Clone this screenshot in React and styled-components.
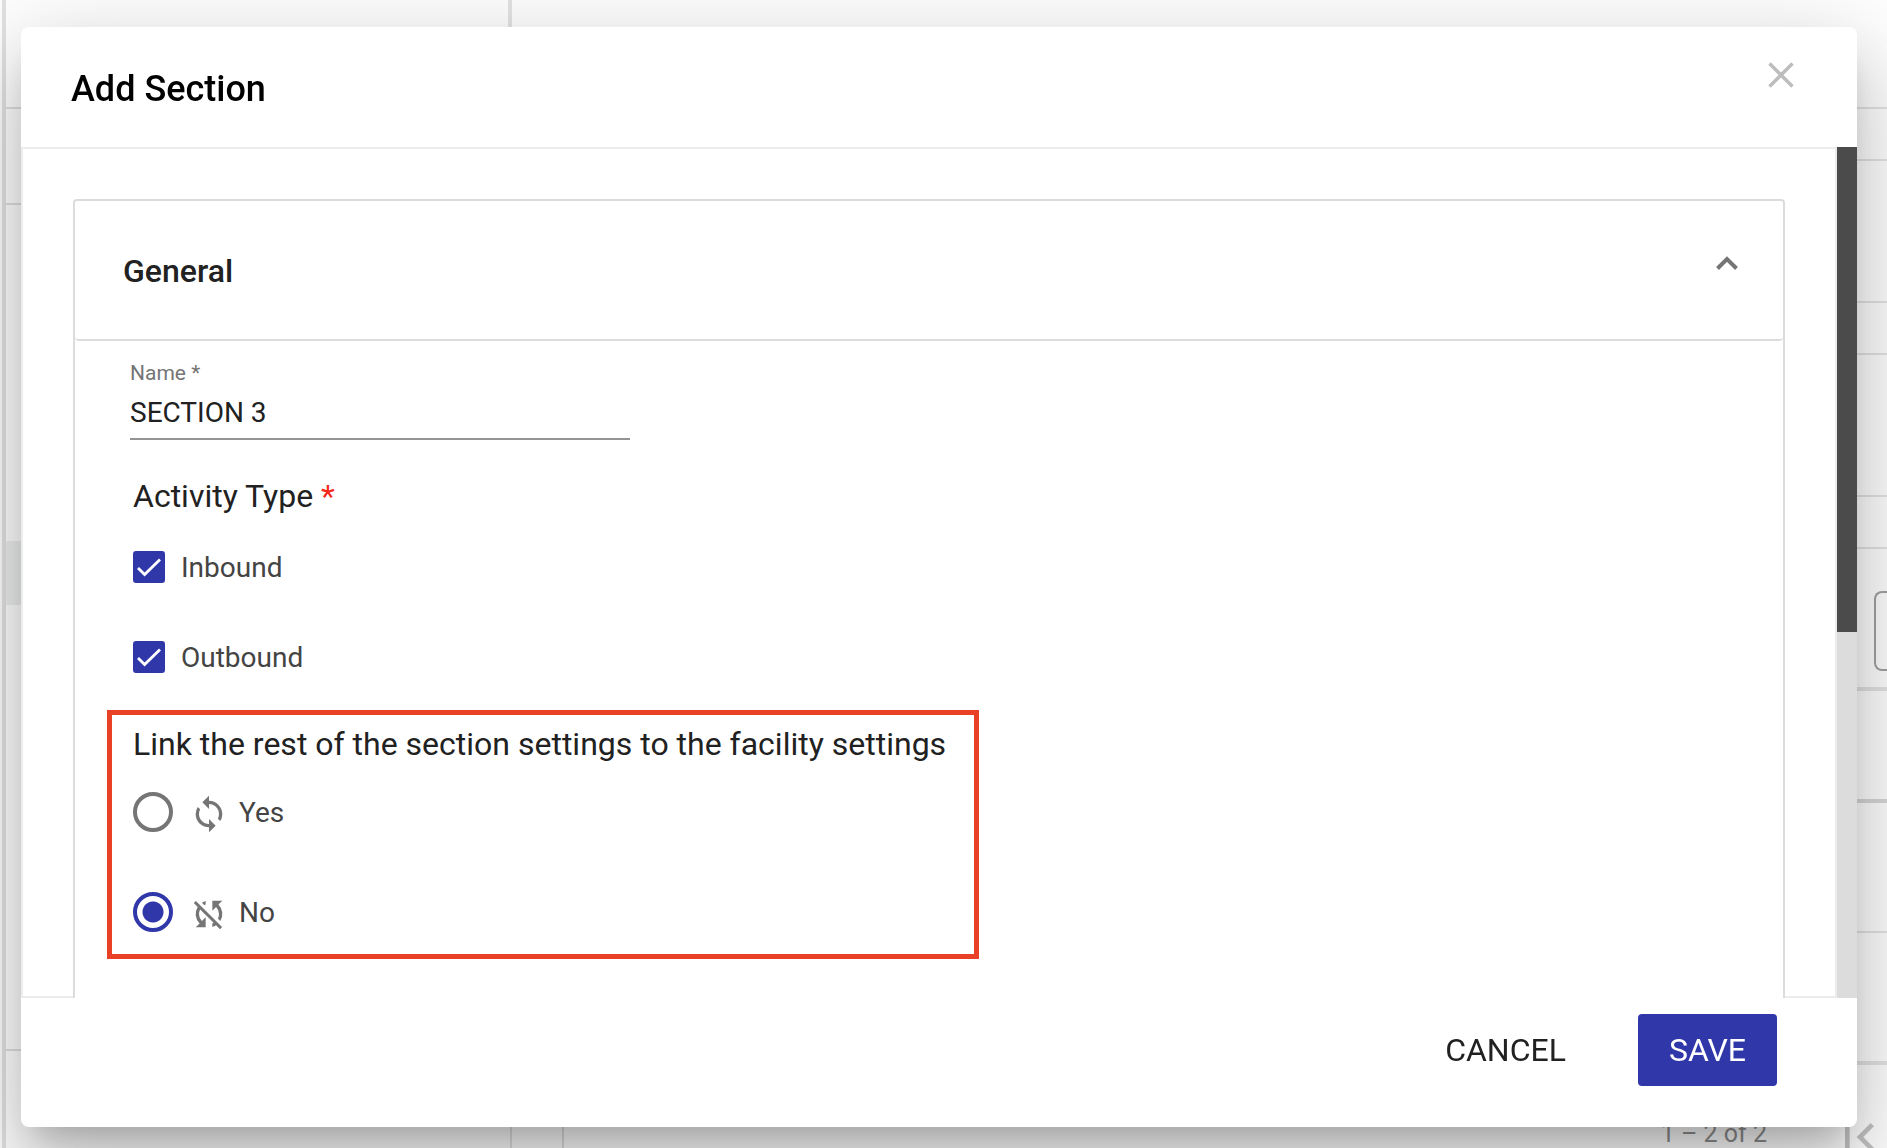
import { useState } from "react";
import styled, { createGlobalStyle } from "styled-components";
import { MdFirstPage, MdSync, MdSyncDisabled } from "react-icons/md";

const colors = {
  primary: "#3037a9",
  text: "#212121",
  label: "#444",
  muted: "#757575",
  line: "#dcdcdc",
  lightLine: "#ececec",
  highlight: "#ea4025",
  required: "#f4291c",
};

const GlobalStyle = createGlobalStyle`
  * {
    box-sizing: border-box;
  }
  body {
    margin: 0;
    overflow: hidden;
    font-family: Roboto, "Liberation Sans", sans-serif;
    color: ${colors.text};
    background: #fff;
  }
  button, input {
    font-family: inherit;
    color: inherit;
  }
`;

/* page behind the dialog */
const Page = styled.div`
  display: flex;
  height: 100vh;
  padding-left: 2px;
  overflow: hidden;
`;

const Sidebar = styled.div`
  flex: 0 0 510px;
  border-left: 4px solid #e2e2e2;
  border-right: 2px solid #e4e4e4;
`;

const SideRow = styled.div`
  height: ${(p) => p.$height}px;
  border-right: ${(p) => (p.$edge ? "2px solid #e4e4e4" : "0")};
  border-bottom: ${(p) => (p.$line ? "2px solid #e0e0e0" : "0")};
  background: ${(p) => (p.$active ? "#eef0f0" : "transparent")};
`;

const Main = styled.div`
  flex: 1;
`;

const MainRow = styled.div`
  display: flex;
  justify-content: flex-end;
  align-items: flex-end;
  height: ${(p) => p.$height}px;
  padding-bottom: 16px;
  border-bottom: ${(p) => p.$line || 2}px solid ${(p) => p.$color || "#e4e4e4"};
`;

const CutBox = styled.div`
  width: 13px;
  height: 80px;
  border: 2px solid #a2a2a2;
  border-right: 0;
  border-radius: 8px 0 0 8px;
`;

const Paginator = styled.div`
  display: flex;
  justify-content: flex-end;
  align-items: center;
  gap: 64px;
  height: 144px;
  border-left: 2px solid #e0e0e0;
  margin-left: 50px;
  color: #8f8f8f;
  font-size: 25px;

  span {
    padding-bottom: 8px;
  }
  svg {
    color: #c4c4c4;
  }
`;

const Overlay = styled.div`
  position: fixed;
  inset: 0;
  display: flex;
  padding: 27px 30px 21px 21px;
`;

const Dialog = styled.form`
  flex: 1;
  display: flex;
  flex-direction: column;
  border-radius: 8px;
  background: #fff;
  box-shadow: 0 22px 30px -14px rgba(0, 0, 0, 0.2),
    0 48px 76px 6px rgba(0, 0, 0, 0.14), 0 18px 92px 16px rgba(0, 0, 0, 0.12);
`;

const DialogHeader = styled.header`
  display: flex;
  justify-content: space-between;
  align-items: flex-start;
`;

const Title = styled.h1`
  margin: 0;
  padding: 42px 50px 38px;
  font-size: 36px;
  line-height: 40px;
  font-weight: 500;
  color: #000;
`;

const IconButton = styled.button`
  display: flex;
  padding: 0;
  border: 0;
  background: none;
  cursor: pointer;
`;

const CloseButton = styled(IconButton)`
  margin: 32px 60px 0 0;
`;

const Body = styled.div`
  flex: 1;
  min-height: 0;
  display: flex;
`;

const Content = styled.div`
  flex: 1;
  display: flex;
  overflow: hidden;
  padding: 50px 50px 0;
  border: 2px solid ${colors.lightLine};
  border-bottom: 0;
  background: linear-gradient(${colors.lightLine}, ${colors.lightLine}) bottom /
    100% 2px no-repeat;
`;

const ScrollTrack = styled.div`
  flex: 0 0 20px;
  background: #dcdcdc;
`;

const ScrollThumb = styled.div`
  height: 57%;
  background: #4b4b4b;
`;

const Panel = styled.section`
  flex: 1;
  border: 2px solid ${colors.line};
  border-bottom: 0;
  border-radius: 4px 4px 0 0;
  background: #fff;
`;

const PanelHeader = styled.div`
  display: flex;
  justify-content: space-between;
  align-items: flex-start;
  padding: 50px 44px 48px 48px;
  border-bottom: 2px solid ${colors.line};
  border-radius: 4px;
`;

const PanelTitle = styled.h2`
  margin: 0;
  font-size: 32px;
  line-height: 40px;
  font-weight: 500;
`;

const PanelBody = styled.div`
  padding: 20px 55px 0;
`;

const Field = styled.label`
  display: flex;
  flex-direction: column;
  gap: 7px;
  max-width: 500px;
  font-size: 21px;
  line-height: 24px;
  color: ${colors.muted};
`;

const TextInput = styled.input`
  height: 48px;
  padding: 0 0 6px;
  border: 0;
  border-bottom: 2px solid #949494;
  outline: none;
  background: none;
  font-size: 28px;
  color: ${colors.text};
`;

const Fieldset = styled.fieldset`
  min-width: 0;
  margin: 36px 0 0;
  padding: 0 0 0 3px;
  border: 0;
`;

const Legend = styled.legend`
  padding: 0;
  font-size: 32px;
  line-height: 40px;
`;

const Required = styled.span`
  color: ${colors.required};
`;

const CheckList = styled.div`
  display: flex;
  flex-direction: column;
  gap: 42px;
  padding-top: 27px;
`;

const CheckRow = styled.label`
  display: flex;
  align-items: center;
  gap: 16px;
  height: 48px;
  font-size: 28px;
  color: ${colors.label};
`;

const CheckMark = styled.span`
  display: grid;

  input,
  svg {
    grid-area: 1 / 1;
  }
  svg {
    pointer-events: none;
  }
`;

const CheckInput = styled.input`
  appearance: none;
  width: 32px;
  height: 32px;
  margin: 0;
  border: 4px solid ${colors.muted};
  border-radius: 3px;

  &:checked {
    border-color: ${colors.primary};
    background: ${colors.primary};
  }
`;

const Highlight = styled.div`
  width: fit-content;
  margin: 29px 0 0 -23px;
  padding: 9px 28px 22px 21px;
  border: 5px solid ${colors.highlight};
`;

const RadioGroup = styled.fieldset`
  margin: 0;
  padding: 0;
  border: 0;
`;

const RadioList = styled.div`
  display: flex;
  flex-direction: column;
  gap: 60px;
  padding-top: 28px;
`;

const RadioRow = styled.label`
  display: flex;
  align-items: center;
  height: 40px;
  font-size: 28px;
  color: ${colors.label};

  svg {
    margin: 4px 10px 0 16px;
    color: ${colors.muted};
  }
`;

const RadioInput = styled.input`
  appearance: none;
  width: 40px;
  height: 40px;
  margin: 0;
  border: 4px solid ${colors.muted};
  border-radius: 50%;

  &:checked {
    border-color: ${colors.primary};
    background: radial-gradient(${colors.primary} 10px, transparent 11px);
  }
`;

const Actions = styled.footer`
  display: flex;
  justify-content: flex-end;
  gap: 41px;
  padding: 16px 80px 41px;
`;

const Button = styled.button`
  height: 72px;
  padding: 0 31px;
  border: 0;
  border-radius: 4px;
  background: ${(p) => (p.$primary ? colors.primary : "transparent")};
  color: ${(p) => (p.$primary ? "#fff" : colors.text)};
  font-size: 32px;
  cursor: pointer;
`;

const CheckOption = ({ label }) => {
  const [checked, setChecked] = useState(true);
  return (
    <CheckRow>
      <CheckMark>
        <CheckInput
          type="checkbox"
          checked={checked}
          onChange={() => setChecked(!checked)}
        />
        {checked && (
          <svg width="32" height="32" viewBox="0 0 32 32" fill="none">
            <path d="M5 17l6.6 6.6L27 8.5" stroke="#fff" strokeWidth="2.8" />
          </svg>
        )}
      </CheckMark>
      {label}
    </CheckRow>
  );
};

const Background = () => (
  <Page aria-hidden="true">
    <Sidebar>
      <SideRow $height={109} $line $edge />
      <SideRow $height={96} $line />
      <SideRow $height={336} />
      <SideRow $height={64} $active />
      <SideRow $height={446} $line />
    </Sidebar>
    <Main>
      <MainRow $height={109} />
      <MainRow $height={52} />
      <MainRow $height={142} />
      <MainRow $height={52} />
      <MainRow $height={142} />
      <MainRow $height={52} />
      <MainRow $height={142} $line={4}>
        <CutBox />
      </MainRow>
      <MainRow $height={112} $line={4} $color="#d8d8d8" />
      <MainRow $height={130} />
      <MainRow $height={132} $line={4} />
      <Paginator>
        <span>1 – 2 of 2</span>
        <MdFirstPage size={56} />
      </Paginator>
    </Main>
  </Page>
);

const App = () => {
  const [name, setName] = useState("SECTION 3");
  const [linked, setLinked] = useState("no");
  const [open, setOpen] = useState(true);

  return (
    <>
      <GlobalStyle />
      <Background />
      <Overlay>
        <Dialog
          role="dialog"
          aria-labelledby="dialog-title"
          onSubmit={(e) => e.preventDefault()}
        >
          <DialogHeader>
            <Title id="dialog-title">Add Section</Title>
            <CloseButton type="button" aria-label="Close">
              <svg width="32" height="32" viewBox="0 0 32 32" fill="none">
                <path d="M4.500 4.500l23 23m0-23l-23 23" stroke="#bdbdbd" strokeWidth="3.5" />
              </svg>
            </CloseButton>
          </DialogHeader>
          <Body>
            <Content>
              <Panel>
                <PanelHeader>
                  <PanelTitle>General</PanelTitle>
                  <IconButton
                    type="button"
                    aria-label="Toggle general settings"
                    aria-expanded={open}
                    onClick={() => setOpen(!open)}
                  >
                    <svg width="24" height="24" viewBox="0 0 24 24" fill="none">
                      <path d="M2.500 17.500L12 8l9.500 9.500" stroke="#757575" strokeWidth="4" />
                    </svg>
                  </IconButton>
                </PanelHeader>
                {open && (
                  <PanelBody>
                    <Field>
                      Name *
                      <TextInput
                        type="text"
                        value={name}
                        onChange={(e) => setName(e.target.value)}
                      />
                    </Field>
                    <Fieldset>
                      <Legend>
                        Activity Type <Required>*</Required>
                      </Legend>
                      <CheckList>
                        <CheckOption label="Inbound" />
                        <CheckOption label="Outbound" />
                      </CheckList>
                    </Fieldset>
                    <Highlight>
                      <RadioGroup>
                        <Legend>
                          Link the rest of the section settings to the facility
                          settings
                        </Legend>
                        <RadioList>
                          <RadioRow>
                            <RadioInput
                              type="radio"
                              name="linked"
                              checked={linked === "yes"}
                              onChange={() => setLinked("yes")}
                            />
                            <MdSync size={40} />
                            Yes
                          </RadioRow>
                          <RadioRow>
                            <RadioInput
                              type="radio"
                              name="linked"
                              checked={linked === "no"}
                              onChange={() => setLinked("no")}
                            />
                            <MdSyncDisabled size={40} />
                            No
                          </RadioRow>
                        </RadioList>
                      </RadioGroup>
                    </Highlight>
                  </PanelBody>
                )}
              </Panel>
            </Content>
            <ScrollTrack>
              <ScrollThumb />
            </ScrollTrack>
          </Body>
          <Actions>
            <Button type="button">CANCEL</Button>
            <Button type="submit" $primary>
              SAVE
            </Button>
          </Actions>
        </Dialog>
      </Overlay>
    </>
  );
};

export default App;
